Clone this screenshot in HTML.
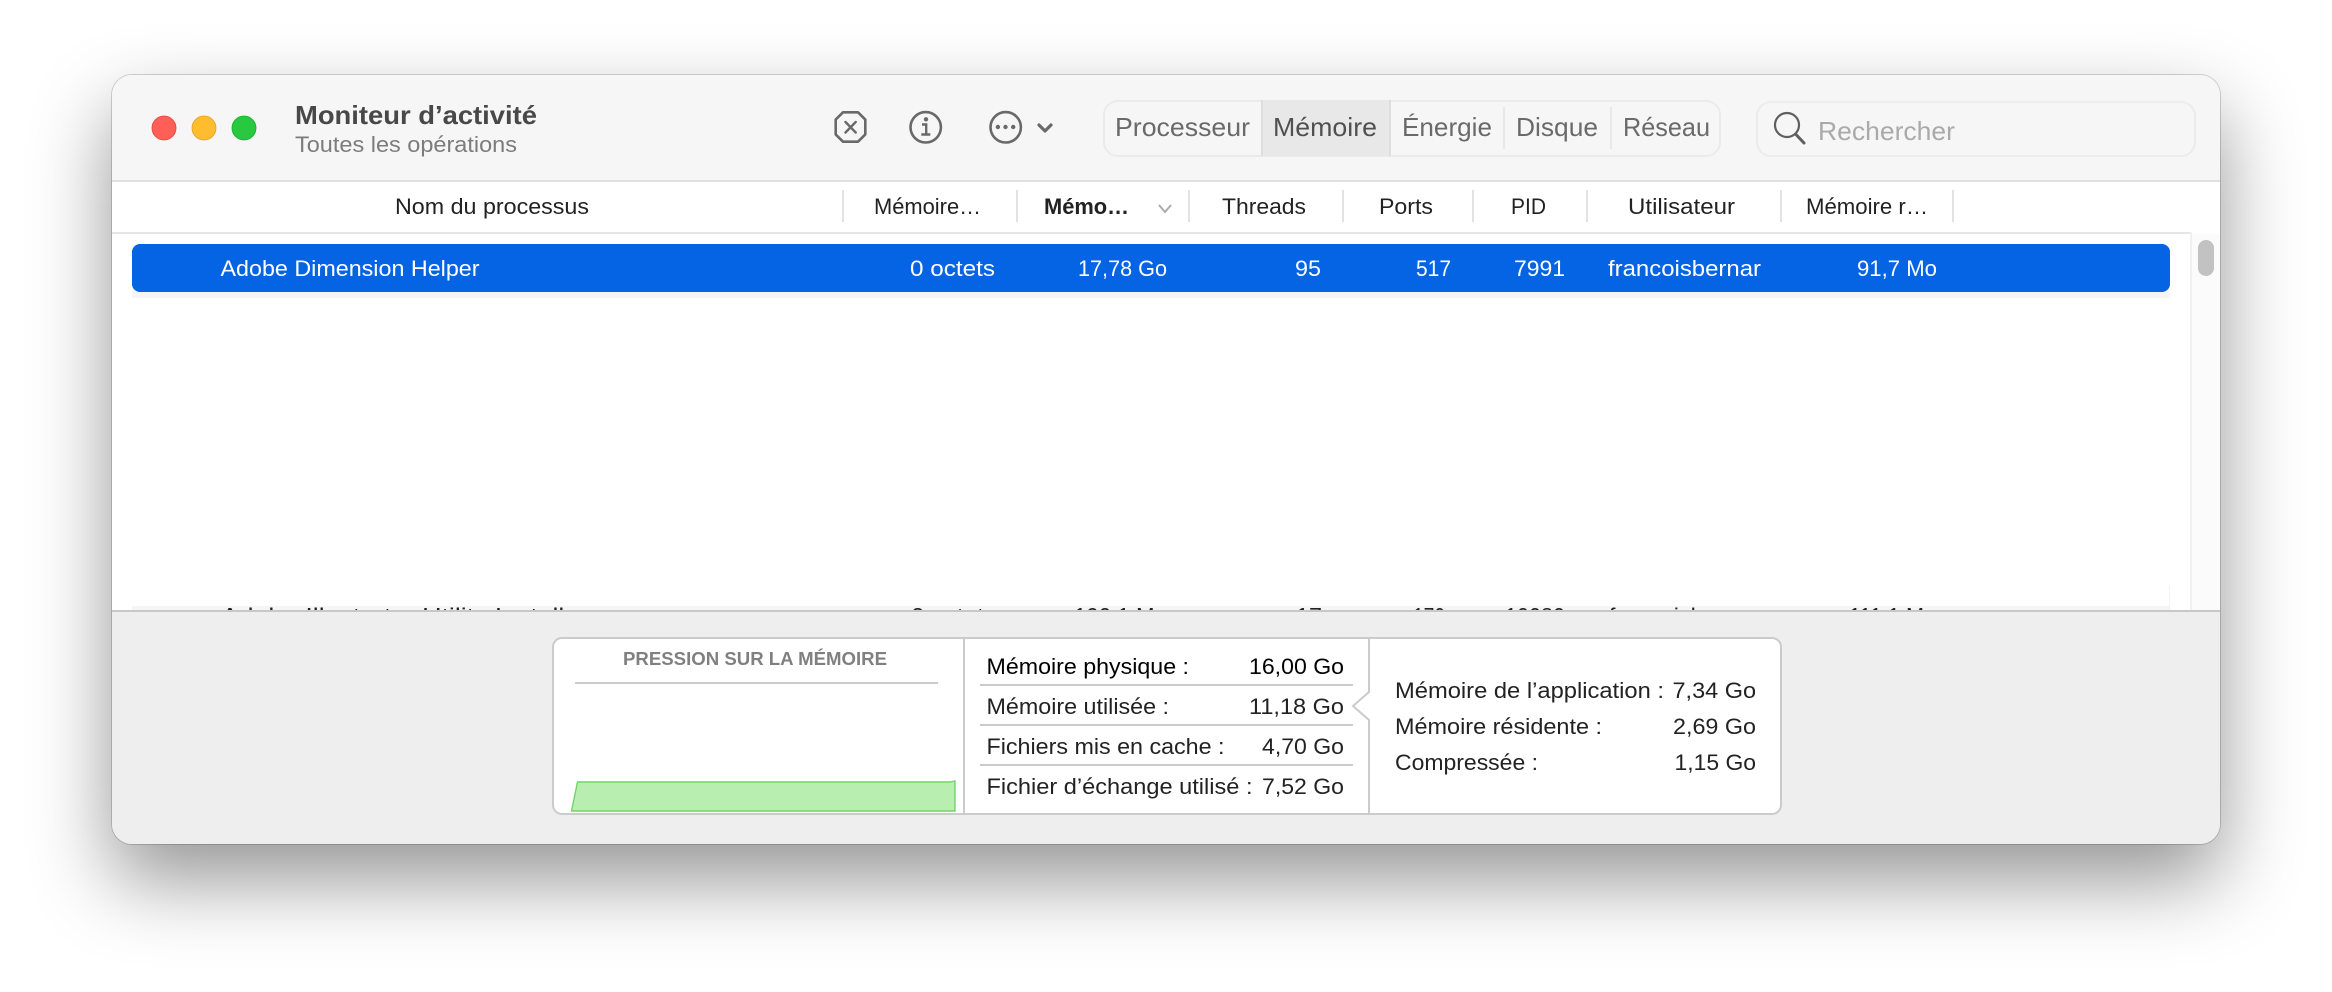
<!DOCTYPE html>
<html lang="fr">
<head>
<meta charset="utf-8">
<title>Moniteur d'activité</title>
<style>
html,body{margin:0;padding:0;width:2332px;height:992px;background:#fff;overflow:hidden}
#win{position:absolute;left:112px;top:75px;width:2108px;height:769px;border-radius:20px;background:#fff;
box-shadow:0 36px 80px rgba(0,0,0,.42),0 0 0 1px rgba(0,0,0,.16)}
svg{position:absolute;left:0;top:0}
text{font-family:"Liberation Sans",sans-serif;font-size:22px;fill:#222}
.t{font-size:26px}
</style>
</head>
<body>
<div id="win"></div>
<svg width="2332" height="992" viewBox="0 0 2332 992" xmlns="http://www.w3.org/2000/svg">
<defs>
<clipPath id="w"><rect x="112" y="75" width="2108" height="769" rx="20"/></clipPath>
<clipPath id="rowclip"><rect x="112" y="560" width="2078" height="50"/></clipPath>
</defs>
<g clip-path="url(#w)">
<!-- toolbar -->
<rect x="112" y="75" width="2108" height="106" fill="#f6f6f6"/>
<rect x="112" y="180" width="2108" height="2" fill="#e0e0e0"/>
<!-- header -->
<rect x="112" y="182" width="2108" height="50" fill="#fff"/>
<rect x="112" y="232" width="2078" height="2" fill="#e6e6e6"/>
<!-- table -->
<rect x="112" y="234" width="2078" height="376" fill="#fff"/>
<rect x="132" y="292" width="2038" height="6" fill="#f5f5f5"/>
<rect x="132" y="606" width="2038" height="4" fill="#f5f5f5"/>
<rect x="2190" y="234" width="30" height="376" fill="#fbfbfb"/>
<rect x="2190" y="232" width="2" height="378" fill="#f0f0f0"/>
<rect x="2169" y="586" width="1" height="24" fill="#f3f3f3"/>
<rect x="2198" y="240" width="16" height="36" rx="8" fill="#c2c2c2"/>
<!-- bottom -->
<rect x="112" y="610" width="2108" height="234" fill="#eeeeee"/>
<rect x="112" y="610" width="2108" height="2" fill="#c8c8c8"/>
</g>

<!-- traffic lights -->
<circle cx="164" cy="128" r="12" fill="#ff5f57" stroke="#e0443e" stroke-width=".8"/>
<circle cx="204" cy="128" r="12" fill="#febc2e" stroke="#dea123" stroke-width=".8"/>
<circle cx="244" cy="128" r="12" fill="#28c840" stroke="#1aab29" stroke-width=".8"/>

<!-- title -->
<text class="t" x="295" y="124" textLength="242" lengthAdjust="spacingAndGlyphs" font-weight="700" style="fill:#484848">Moniteur d’activité</text>
<text x="295" y="152" textLength="222" lengthAdjust="spacingAndGlyphs" style="fill:#7c7c7c">Toutes les opérations</text>

<!-- toolbar icons -->
<g fill="none" stroke="#696969" stroke-width="2.6" stroke-linecap="round" stroke-linejoin="round">
<path d="M843 112.3 H858 L865.3 119.6 V134.4 L858 141.7 H843 L835.7 134.4 V119.6 Z"/>
<path d="M845.5 122 L855.7 132.5 M855.7 122 L845.5 132.5" stroke-width="2.4"/>
<circle cx="925.7" cy="127.3" r="15.2"/>
<path d="M922 124.5 H926.2 V134.5 M921.3 134.5 H930.3" stroke-width="2.4" stroke-linecap="butt" stroke-linejoin="miter"/>
<circle cx="1005.7" cy="127.3" r="15.2"/>
<path d="M1039 125 L1045 131 L1051 125" stroke-width="3.2"/>
</g>
<circle cx="926" cy="119.3" r="2.2" fill="#696969"/>
<circle cx="997.9" cy="127" r="2.2" fill="#696969"/>
<circle cx="1005.5" cy="127" r="2.2" fill="#696969"/>
<circle cx="1013.2" cy="127" r="2.2" fill="#696969"/>

<!-- segmented -->
<rect x="1104" y="101" width="616" height="55" rx="14" fill="#f6f6f6" stroke="#ebebeb" stroke-width="2"/>
<rect x="1262" y="100" width="128" height="56" fill="#e8e8e8"/>
<rect x="1261" y="100" width="2" height="56" fill="#dedede"/>
<rect x="1389" y="100" width="2" height="56" fill="#dedede"/>
<rect x="1503" y="107" width="2" height="42" fill="#e8e8e8"/>
<rect x="1610" y="107" width="2" height="42" fill="#e8e8e8"/>
<text class="t" x="1115" y="136" textLength="135" lengthAdjust="spacingAndGlyphs" style="fill:#6a6a6a">Processeur</text>
<text class="t" x="1273" y="136" textLength="104" lengthAdjust="spacingAndGlyphs" style="fill:#505050">Mémoire</text>
<text class="t" x="1402" y="136" textLength="90" lengthAdjust="spacingAndGlyphs" style="fill:#6a6a6a">Énergie</text>
<text class="t" x="1516" y="136" textLength="82" lengthAdjust="spacingAndGlyphs" style="fill:#6a6a6a">Disque</text>
<text class="t" x="1623" y="136" textLength="87" lengthAdjust="spacingAndGlyphs" style="fill:#6a6a6a">Réseau</text>

<!-- search -->
<rect x="1757" y="102" width="438" height="54" rx="14" fill="#f6f6f6" stroke="#ececec" stroke-width="2"/>
<g fill="none" stroke="#5f5f5f" stroke-width="2.2" stroke-linecap="round">
<circle cx="1787" cy="125" r="12"/>
<path d="M1796 134.5 L1804 143" stroke-width="3"/>
</g>
<text class="t" x="1818" y="140" textLength="137" lengthAdjust="spacingAndGlyphs" style="fill:#aaaaaa">Rechercher</text>

<!-- header separators -->
<g fill="#e2e2e2">
<rect x="842" y="190" width="2" height="32"/>
<rect x="1016" y="190" width="2" height="32"/>
<rect x="1188" y="190" width="2" height="32"/>
<rect x="1342" y="190" width="2" height="32"/>
<rect x="1472" y="190" width="2" height="32"/>
<rect x="1586" y="190" width="2" height="32"/>
<rect x="1780" y="190" width="2" height="32"/>
<rect x="1952" y="190" width="2" height="32"/>
</g>
<!-- header text -->
<text x="395" y="214" textLength="194" lengthAdjust="spacingAndGlyphs">Nom du processus</text>
<text x="874" y="214" textLength="107" lengthAdjust="spacingAndGlyphs">Mémoire…</text>
<text x="1044" y="214" textLength="85" lengthAdjust="spacingAndGlyphs" font-weight="700">Mémo…</text>
<path d="M1159 205 L1165 212 L1171 205" fill="none" stroke="#aaaaaa" stroke-width="2"/>
<text x="1222" y="214" textLength="84" lengthAdjust="spacingAndGlyphs">Threads</text>
<text x="1379" y="214" textLength="54" lengthAdjust="spacingAndGlyphs">Ports</text>
<text x="1511" y="214" textLength="35" lengthAdjust="spacingAndGlyphs">PID</text>
<text x="1628" y="214" textLength="107" lengthAdjust="spacingAndGlyphs">Utilisateur</text>
<text x="1806" y="214" textLength="122" lengthAdjust="spacingAndGlyphs">Mémoire r…</text>

<!-- selected row -->
<rect x="132" y="244" width="2038" height="48" rx="8" fill="#0464e4"/>
<g>
<text x="220.5" y="276" textLength="259" lengthAdjust="spacingAndGlyphs" style="fill:#fff">Adobe Dimension Helper</text>
<text x="910" y="276" textLength="85" lengthAdjust="spacingAndGlyphs" style="fill:#fff">0 octets</text>
<text x="1078" y="276" textLength="89" lengthAdjust="spacingAndGlyphs" style="fill:#fff">17,78 Go</text>
<text x="1295" y="276" textLength="26" lengthAdjust="spacingAndGlyphs" style="fill:#fff">95</text>
<text x="1416" y="276" textLength="35" lengthAdjust="spacingAndGlyphs" style="fill:#fff">517</text>
<text x="1514" y="276" textLength="51" lengthAdjust="spacingAndGlyphs" style="fill:#fff">7991</text>
<text x="1608" y="276" textLength="153" lengthAdjust="spacingAndGlyphs" style="fill:#fff">francoisbernar</text>
<text x="1857" y="276" textLength="80" lengthAdjust="spacingAndGlyphs" style="fill:#fff">91,7 Mo</text>
</g>

<!-- clipped row -->
<g clip-path="url(#rowclip)">
<text x="221" y="623.5" textLength="367" lengthAdjust="spacingAndGlyphs">Adobe Illustrator Utility Installer</text>
<text x="911" y="623.5" textLength="85" lengthAdjust="spacingAndGlyphs">0 octets</text>
<text x="1074" y="623.5" textLength="93" lengthAdjust="spacingAndGlyphs">190,1 Mo</text>
<text x="1296" y="623.5" textLength="26" lengthAdjust="spacingAndGlyphs">17</text>
<text x="1413" y="623.5" textLength="32" lengthAdjust="spacingAndGlyphs">170</text>
<text x="1505" y="623.5" textLength="60" lengthAdjust="spacingAndGlyphs">10080</text>
<text x="1609" y="623.5" textLength="149" lengthAdjust="spacingAndGlyphs">francoisbernar</text>
<text x="1849" y="623.5" textLength="87" lengthAdjust="spacingAndGlyphs">111,1 Mo</text>
</g>

<!-- memory panel -->
<rect x="553" y="638" width="1228" height="176" rx="9" fill="#fff" stroke="#cbcbcb" stroke-width="2"/>
<rect x="963" y="638" width="2" height="176" fill="#cbcbcb"/>
<path d="M1369 638 V692 L1353 706 L1369 720 V814" fill="#fff" stroke="#cbcbcb" stroke-width="2"/>
<text x="623" y="665" textLength="264" lengthAdjust="spacingAndGlyphs" font-weight="700" style="font-size:18px;fill:#808080">PRESSION SUR LA MÉMOIRE</text>
<rect x="575" y="682" width="363" height="2" fill="#cbcbcb"/>
<path d="M577.5 782 L950 782 L955 781 V811 H571.5 Z" fill="#b8efb0" stroke="#73d26b" stroke-width="1.4"/>

<g fill="#cbcbcb">
<rect x="980" y="684" width="373" height="2"/>
<rect x="980" y="724" width="373" height="2"/>
<rect x="980" y="764" width="373" height="2"/>
</g>
<text x="986.5" y="674" textLength="202.5" lengthAdjust="spacingAndGlyphs" style="fill:#000">Mémoire physique :</text>
<text x="1249" y="674" textLength="95" lengthAdjust="spacingAndGlyphs" style="fill:#000">16,00 Go</text>
<text x="986.5" y="714" textLength="182.5" lengthAdjust="spacingAndGlyphs">Mémoire utilisée :</text>
<text x="1249" y="714" textLength="95" lengthAdjust="spacingAndGlyphs">11,18 Go</text>
<text x="986.5" y="754" textLength="238" lengthAdjust="spacingAndGlyphs">Fichiers mis en cache :</text>
<text x="1262" y="754" textLength="82" lengthAdjust="spacingAndGlyphs">4,70 Go</text>
<text x="986.5" y="794" textLength="266" lengthAdjust="spacingAndGlyphs">Fichier d’échange utilisé :</text>
<text x="1262" y="794" textLength="82" lengthAdjust="spacingAndGlyphs">7,52 Go</text>

<text x="1395" y="698" textLength="269" lengthAdjust="spacingAndGlyphs">Mémoire de l’application :</text>
<text x="1672.5" y="698" textLength="83.5" lengthAdjust="spacingAndGlyphs">7,34 Go</text>
<text x="1395" y="734" textLength="207" lengthAdjust="spacingAndGlyphs">Mémoire résidente :</text>
<text x="1673" y="734" textLength="83" lengthAdjust="spacingAndGlyphs">2,69 Go</text>
<text x="1395" y="770" textLength="143" lengthAdjust="spacingAndGlyphs">Compressée :</text>
<text x="1674.5" y="770" textLength="81.5" lengthAdjust="spacingAndGlyphs">1,15 Go</text>
</svg>
</body>
</html>
